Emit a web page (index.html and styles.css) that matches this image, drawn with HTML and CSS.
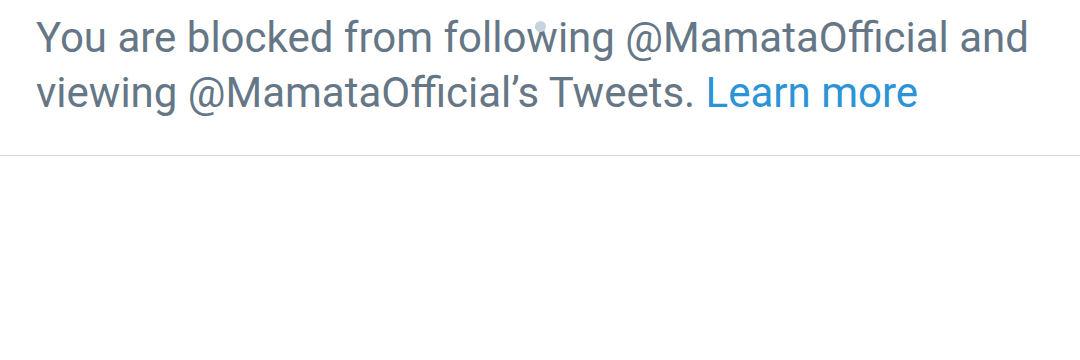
FILE: index.html
```html
<html lang="en">
<head>
  <meta charset="UTF-8">
  <title>Blocked</title>
  <link rel="stylesheet" href="styles.css">
</head>
<body>

<div class="notice">
  <p class="notice_text">You are blocked from following @MamataOfficial and viewing @MamataOfficial’s Tweets. <a class="notice_link" href="#">Learn more</a></p>
  <span class="notice_dot"></span>
</div>

</body>
</html>
```

FILE: styles.css
```css
* {
  padding: 0;
  margin: 0;
  box-sizing: border-box;
}

body {
  background: #ffffff;
  font-family: Roboto, 'Noto Sans', sans-serif;
}

.notice {
  position: relative;
  padding: 10px 20px 0 36px;
  height: 156px;
  border-bottom: 1px solid #d6d9db;
}

.notice_text {
  font-size: 42px;
  line-height: 55px;
  color: #657786;
}

.notice_link {
  color: #2b93d6;
  text-decoration: none;
}

.notice_dot {
  position: absolute;
  left: 535px;
  top: 21px;
  width: 11px;
  height: 11px;
  border-radius: 50%;
  background: #c9d3dd;
}
```
